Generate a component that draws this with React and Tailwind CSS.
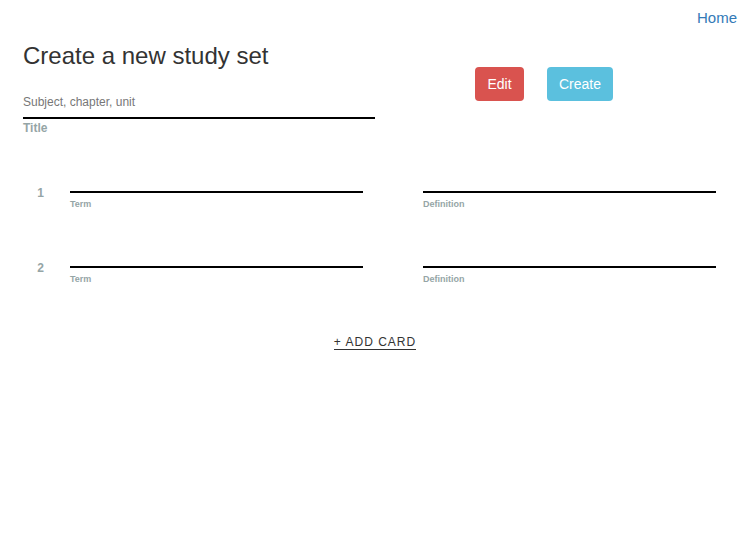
export default function App() {
    const cards = [1, 2];

    return (
        <div className="relative min-h-[552px] bg-white font-['Liberation_Sans',Arial,sans-serif] text-[#333]">
            <div className="flex justify-end pr-4 pt-[8px]">
                <a href="#" className="text-[15px] leading-[20px] text-[#337ab7]">
                    Home
                </a>
            </div>

            <div className="flex pl-[23px]">
                <div className="w-[352px]">
                    <h1 className="mt-[13px] text-[24px] leading-[30px] text-[#333]">
                        Create a new study set
                    </h1>
                    <div className="mt-[24px] border-b-2 border-black pb-[8px] text-[12px] leading-[14px] text-[#777]">
                        Subject, chapter, unit
                    </div>
                    <div className="mt-[2px] text-[12px] font-bold leading-[14px] text-[#95a5a6]">
                        Title
                    </div>
                </div>
                <div className="ml-[100px] mt-[39px] flex gap-[23px]">
                    <button className="h-[34px] w-[49px] rounded-[4px] bg-[#d9534f] text-[14px] text-white">
                        Edit
                    </button>
                    <button className="h-[34px] w-[66px] rounded-[4px] bg-[#5bc0de] text-[14px] text-white">
                        Create
                    </button>
                </div>
            </div>

            <div className="mt-[50px] flex flex-col gap-[51px]">
                {cards.map((n) => (
                    <div key={n} className="flex items-start">
                        <div className="mt-[1px] w-[70px] pr-[26px] text-right text-[12px] font-bold leading-[14px] text-[#95a5a6]">
                            {n}
                        </div>
                        <div className="mt-[6px] w-[293px]">
                            <div className="border-b-2 border-black" />
                            <div className="mt-[6px] text-[9px] font-bold leading-[10px] text-[#95a5a6]">
                                Term
                            </div>
                        </div>
                        <div className="ml-[60px] mt-[6px] w-[293px]">
                            <div className="border-b-2 border-black" />
                            <div className="mt-[6px] text-[9px] font-bold leading-[10px] text-[#95a5a6]">
                                Definition
                            </div>
                        </div>
                    </div>
                ))}
            </div>

            <div className="mt-[52px] flex justify-center pr-[3px]">
                <a
                    href="#"
                    className="border-b border-[#333] text-[12px] leading-[13px] tracking-[1px] text-[#333]"
                >
                    + ADD CARD
                </a>
            </div>
        </div>
    );
}
